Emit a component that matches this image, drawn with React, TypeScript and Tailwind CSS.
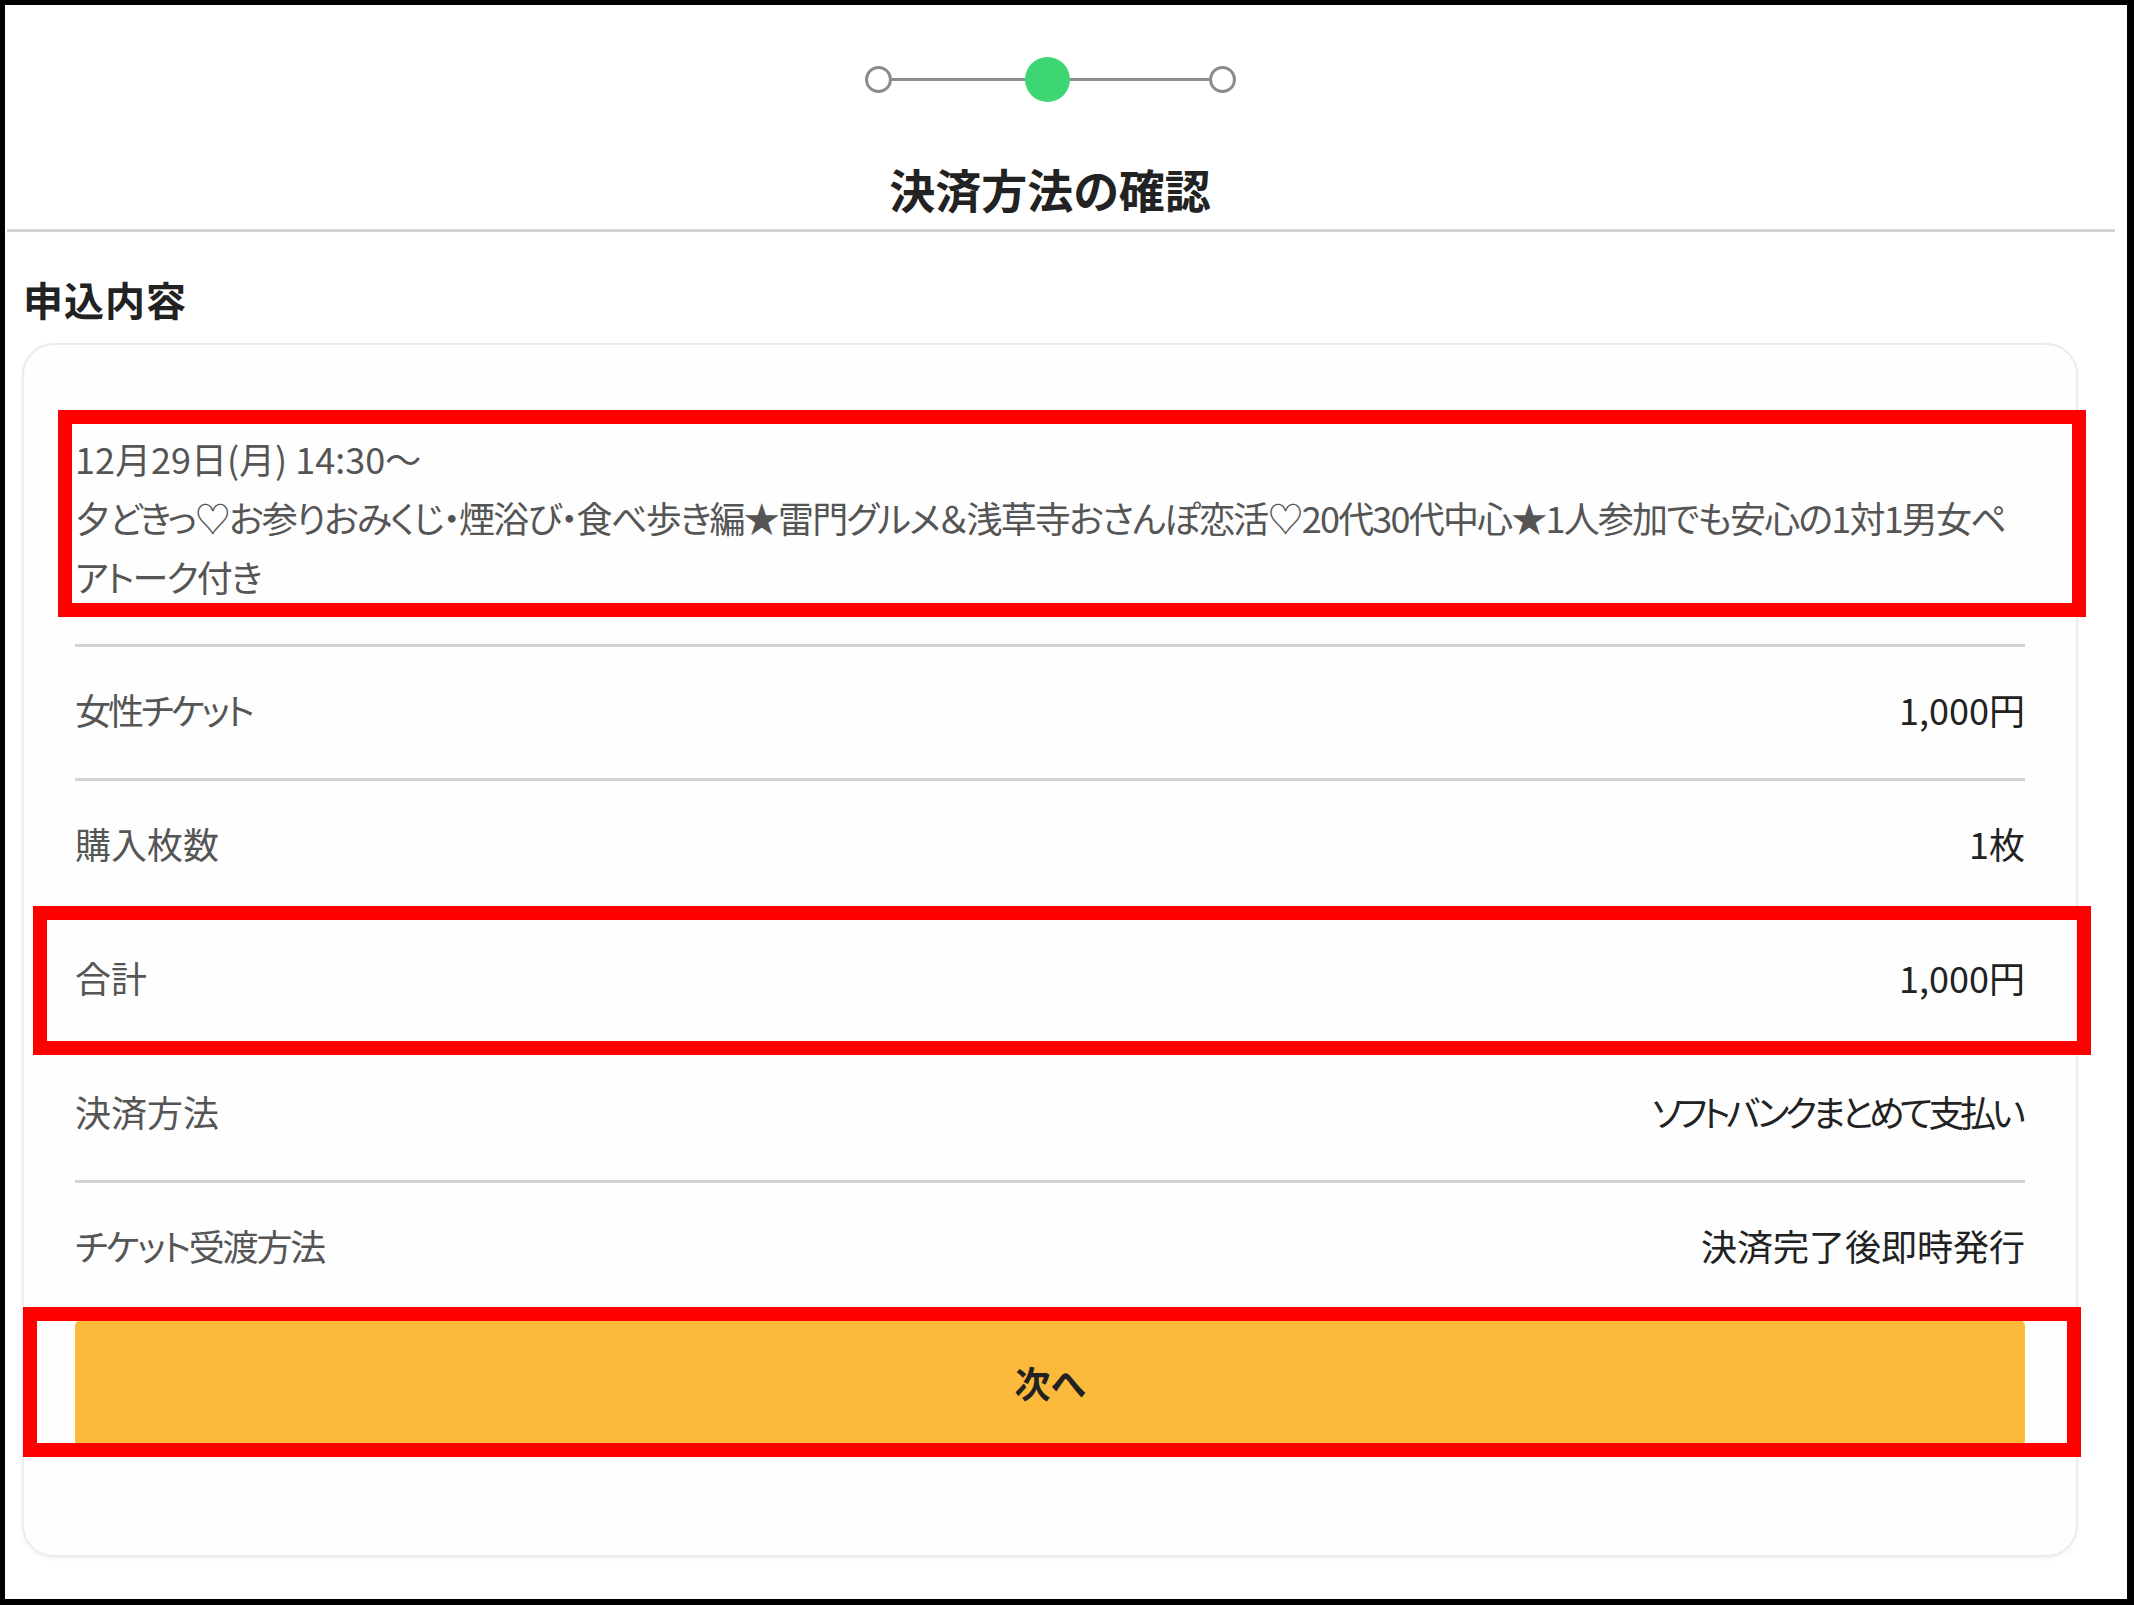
import React from "react";

// tracking is tuned per text: the reference font sets kana narrower than Noto does
const rows = [
  { label: "女性チケット", labelTrack: "tracking-[-3px]", value: "1,000円", valueTrack: "" },
  { label: "購入枚数", labelTrack: "", value: "1枚", valueTrack: "" },
  { label: "合計", labelTrack: "", value: "1,000円", valueTrack: "" },
  { label: "決済方法", labelTrack: "", value: "ソフトバンクまとめて支払い", valueTrack: "tracking-[-4.5px] mr-[4px]" },
  { label: "チケット受渡方法", labelTrack: "tracking-[-2.2px]", value: "決済完了後即時発行", valueTrack: "" },
];

function Stepper() {
  return (
    <div className="flex h-[45px] items-center justify-center">
      <div className="h-[27px] w-[27px] rounded-full border-[3px] border-[#8c8c8c] bg-white" />
      <div className="h-[3px] w-[133px] bg-[#8c8c8c]" />
      <div className="h-[45px] w-[45px] rounded-full bg-[#3dd673]" />
      <div className="h-[3px] w-[139px] bg-[#8c8c8c]" />
      <div className="h-[27px] w-[27px] rounded-full border-[3px] border-[#8c8c8c] bg-white" />
    </div>
  );
}

export default function App() {
  return (
    <div className="relative h-[1605px] w-[2134px] overflow-hidden border-black border-t-[5px] border-l-[5px] border-r-[7px] border-b-[6px] bg-white font-['Noto_Sans_CJK_JP',sans-serif] text-[#222] [font-feature-settings:'palt']">
      <div className="w-[2090px]">
        <div className="pt-[52px]">
          <Stepper />
        </div>
        <h1 className="mt-[63px] h-[46px] text-center text-[46px] font-bold leading-[46px] text-[#222]">
          決済方法の確認
        </h1>
      </div>

      {/* header rule runs a little wider than the content column */}
      <div className="ml-[2px] mt-[18px] h-[3px] w-[2108px] bg-[#d4d4d4]" />

      <div className="w-[2090px]">
        <h2 className="ml-[18px] mt-[47px] text-[40px] font-bold leading-[40px] tracking-[1px] text-[#222]">申込内容</h2>

        <div className="ml-[17px] mt-[24px] w-[2056px] rounded-[32px] border-2 border-[#ececec] bg-[#fefefe] px-[51px] pb-[109px] pt-[84px] shadow-[0_2px_4px_rgba(0,0,0,0.05)]">
          <div className="whitespace-nowrap pb-[38px] text-[36px] leading-[59px] text-[#555]">
            <p>12月29日(月) 14:30～</p>
            <p className="tracking-[-1.8px]">
              夕どきっ♡お参りおみくじ・煙浴び・食べ歩き編★雷門グルメ＆浅草寺おさんぽ恋活♡20代30代中心★1人参加でも安心の1対1男女ペ
              <br />
              アトーク付き
            </p>
          </div>

          {rows.map((r) => (
            <div
              key={r.label}
              className="flex h-[134px] items-center justify-between border-t-[3px] border-[#d2d2d2] pb-[8px] text-[36px]"
            >
              <span className={`text-[#555] ${r.labelTrack}`}>{r.label}</span>
              <span className={`text-[#222] ${r.valueTrack}`}>{r.value}</span>
            </div>
          ))}

          <button className="mt-[6px] flex h-[126px] w-full items-center justify-center rounded-[6px] bg-[#fcba3d] pb-[2px] text-[36px] font-bold text-[#222]">
            次へ
          </button>
        </div>
      </div>

      {/* red annotation boxes */}
      <div className="pointer-events-none absolute left-[53px] top-[405px] h-[207px] w-[2028px] border-[14px] border-[#ff0000]" />
      <div className="pointer-events-none absolute left-[28px] top-[901px] h-[149px] w-[2058px] border-[14px] border-[#ff0000]" />
      <div className="pointer-events-none absolute left-[18px] top-[1302px] h-[150px] w-[2058px] border-[14px] border-[#ff0000]" />
    </div>
  );
}
